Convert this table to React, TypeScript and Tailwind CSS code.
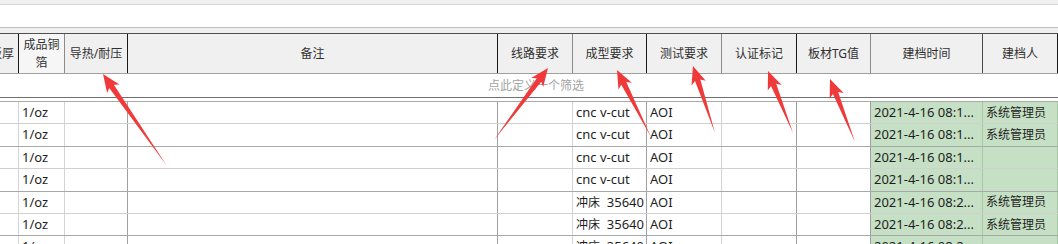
import React from 'react';

const font = { fontFamily: '"Noto Sans", "Noto Sans CJK SC", sans-serif' };

// column widths, header border colour, body border colour
const cols = [
  { w: 'w-[19px]', head: 'border-[#1a1a1a]', body: 'border-[#d4d4d4]' },
  { w: 'w-[46px]', head: 'border-[#8a8a8a]', body: 'border-[#d4d4d4]' },
  { w: 'w-[63px]', head: 'border-[#1a1a1a]', body: 'border-[#a0a0a0]' },
  { w: 'w-[370px]', head: 'border-[#1a1a1a]', body: 'border-[#a0a0a0]' },
  { w: 'w-[75px]', head: 'border-[#8a8a8a]', body: 'border-[#d4d4d4]' },
  { w: 'w-[74px]', head: 'border-[#1a1a1a]', body: 'border-[#a0a0a0]' },
  { w: 'w-[75px]', head: 'border-[#8a8a8a]', body: 'border-[#d4d4d4]' },
  { w: 'w-[75px]', head: 'border-[#1a1a1a]', body: 'border-[#a0a0a0]' },
  { w: 'w-[74px]', head: 'border-[#8a8a8a]', body: 'border-[#a0a0a0]' },
  { w: 'w-[112px]', head: 'border-[#4a4a4a]', body: 'border-[#a9c7a8]' },
  { w: 'w-[75px]', head: 'border-[#1a1a1a]', body: 'border-[#a9c7a8]' },
];

const headers = ['板厚', '成品铜箔', '导热/耐压', '备注', '线路要求', '成型要求', '测试要求', '认证标记', '板材TG值', '建档时间', '建档人'];

const cnc = 'cnc v-cut';
const punch = 'punch';
const rows = [
  { form: cnc, time: '2021-4-16 08:1...', user: '系统管理员' },
  { form: cnc, time: '2021-4-16 08:1...', user: '系统管理员' },
  { form: cnc, time: '2021-4-16 08:1...', user: '' },
  { form: cnc, time: '2021-4-16 08:1...', user: '' },
  { form: punch, time: '2021-4-16 08:2...', user: '系统管理员' },
  { form: punch, time: '2021-4-16 08:2...', user: '系统管理员' },
  { form: punch, time: '2021-4-16 08:2...', user: '' },
];

const arrows: [number, number, number, number][] = [
  [167, 166, 103, 74],
  [494, 140, 548, 68],
  [651, 137, 617, 70],
  [715, 133, 693, 66],
  [793, 133, 768, 71],
  [855, 142, 830, 79],
];

function arrowPoints(tx: number, ty: number, px: number, py: number) {
  const dx = px - tx;
  const dy = py - ty;
  const len = Math.hypot(dx, dy);
  const ux = dx / len;
  const uy = dy / len;
  const nx = -uy;
  const ny = ux;
  const h = 15;
  const sw = 2.8;
  const hw = 7.5;
  const pts = [
    [tx, ty],
    [px - ux * h + nx * sw, py - uy * h + ny * sw],
    [px - ux * (h + 3) + nx * hw, py - uy * (h + 3) + ny * hw],
    [px, py],
    [px - ux * (h + 3) - nx * hw, py - uy * (h + 3) - ny * hw],
    [px - ux * h - nx * sw, py - uy * h - ny * sw],
  ];
  return pts.map((p) => p.join(',')).join(' ');
}

function Cell({ i, children, green }: { i: number; children?: React.ReactNode; green?: boolean }) {
  return (
    <div
      className={`${cols[i].w} ${cols[i].body} shrink-0 h-full border-r flex items-center px-[3px] overflow-hidden whitespace-nowrap ${
        green ? 'bg-[#c6e0c5]' : ''
      }`}
    >
      {children}
    </div>
  );
}

export default function App() {
  return (
    <div className="relative w-[1058px] h-[244px] overflow-hidden bg-white text-[#1e1e1e]" style={font}>
      {/* toolbar strips */}
      <div className="h-[5px] bg-[#f0f0f0] border-b border-[#d6d6d6]" />
      <div className="h-[23px] bg-white border-b border-[#c0c0c0]" />
      <div className="h-[5px] bg-[#efefef]" />

      {/* header */}
      <div className="flex h-[41px] bg-[#f0f0f0] border-t border-b border-t-[#505050] border-b-[#a0a0a0] text-[12px] text-[#303030]">
        {headers.map((h, i) => (
          <div
            key={h}
            className={`${cols[i].w} ${cols[i].head} shrink-0 h-full border-r flex items-center overflow-hidden leading-[18px] ${
              i === 0 ? 'justify-end pr-[4px] whitespace-nowrap' : 'justify-center text-center px-[4px]'
            } ${i === 1 ? 'bg-[#f6f6f6]' : ''}`}
          >
            {h}
          </div>
        ))}
      </div>

      {/* filter row */}
      <div className="h-[24px] border-b border-[#707070] flex items-center pl-[488px] text-[12px] text-[#a3a3a3]">
        点此定义一个筛选
      </div>
      <div className="h-[4px] border-b border-[#a8a8a8]" />

      {/* data rows */}
      {rows.map((r, idx) => (
        <div
          key={idx}
          className={`flex h-[22.4px] border-b text-[13px] ${idx % 2 === 0 ? 'border-[#d0d0d0]' : 'border-[#a8a8a8]'}`}
        >
          <Cell i={0} />
          <Cell i={1}>1/oz</Cell>
          <Cell i={2} />
          <Cell i={3} />
          <Cell i={4} />
          <Cell i={5}>
            {r.form === punch ? (
              <span className="whitespace-pre">
                <span className="text-[12px]">冲床</span>  35640
              </span>
            ) : (
              r.form
            )}
          </Cell>
          <Cell i={6}>AOI</Cell>
          <Cell i={7} />
          <Cell i={8} />
          <Cell i={9} green>
            {r.time}
          </Cell>
          <Cell i={10} green>
            <span className="text-[12px]">{r.user}</span>
          </Cell>
        </div>
      ))}

      {/* annotation arrows */}
      <svg className="absolute inset-0 pointer-events-none" width={1058} height={244}>
        {arrows.map((a, i) => (
          <polygon key={i} points={arrowPoints(a[0], a[1], a[2], a[3])} fill="#f03a3a" />
        ))}
      </svg>
    </div>
  );
}
